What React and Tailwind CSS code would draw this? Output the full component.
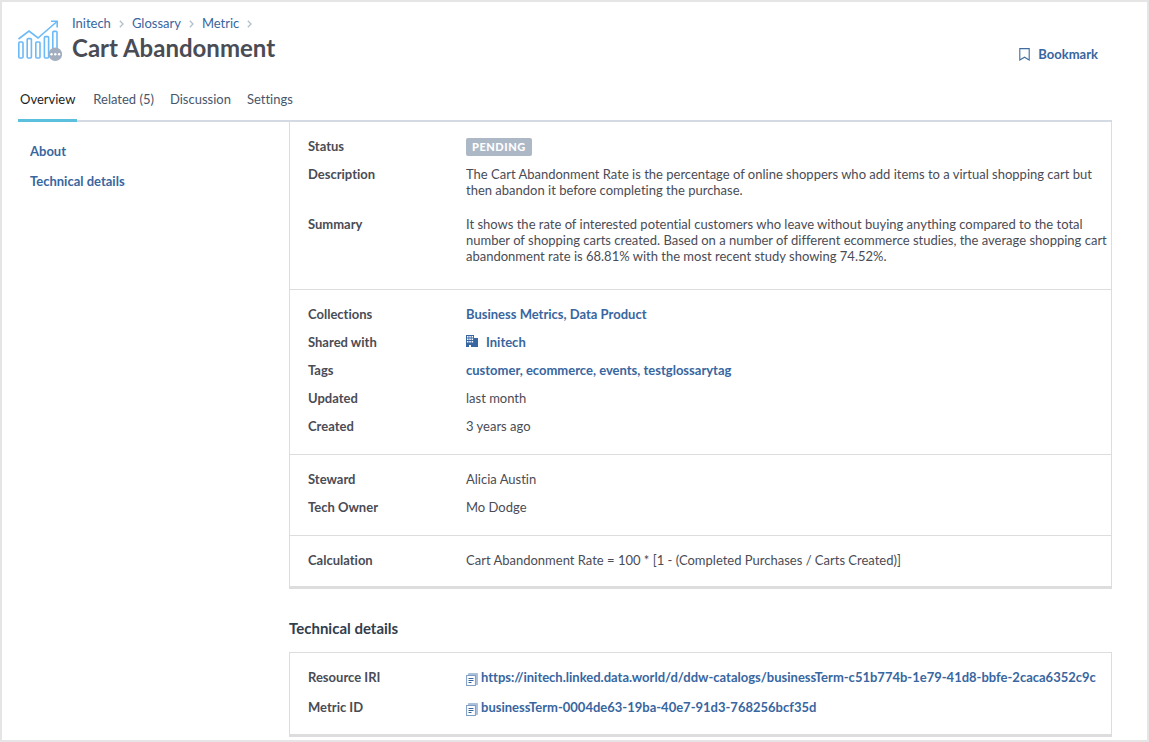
import React from 'react';

const tabs = ['Overview', 'Related (5)', 'Discussion', 'Settings'];
const crumbs = ['Initech', 'Glossary', 'Metric'];

const MetricIcon = () => (
  <svg className="h-[41px] w-11 shrink-0" viewBox="0 0 44 41" fill="none" aria-hidden="true">
    <g stroke="#6cbaf7" strokeWidth="1.6">
      <rect x="0.8" y="22" width="4.2" height="16" rx="1" />
      <rect x="9.2" y="18.6" width="4.2" height="19.4" rx="1" />
      <rect x="17.8" y="22" width="4.2" height="16" rx="1" />
      <rect x="26.4" y="16.6" width="4.2" height="21.4" rx="1" />
      <rect x="34.8" y="11.4" width="4.2" height="26.6" rx="1" />
      <path d="M0.5 19 L11 11 L20 18 L39 1.5" />
      <path d="M33 1.2 H39.2 V7.5" />
    </g>
    <circle cx="37.3" cy="34.2" r="6.8" fill="#a2aebd" />
    <g fill="#fff">
      <circle cx="33.5" cy="34.2" r="1.2" />
      <circle cx="37.3" cy="34.2" r="1.2" />
      <circle cx="41.1" cy="34.2" r="1.2" />
    </g>
  </svg>
);

const ChevronIcon = () => (
  <svg className="mt-0.5 h-2 w-[5px]" viewBox="0 0 5 8" fill="none" stroke="#b4bfcc" strokeWidth="1.3" aria-hidden="true">
    <path d="M0.8 0.8 L4 4 L0.8 7.2" />
  </svg>
);

const BookmarkIcon = () => (
  <svg className="h-[13px] w-[11px]" viewBox="0 0 11 13" fill="none" stroke="#3f6c9f" strokeWidth="1.1" aria-hidden="true">
    <path d="M0.8 0.6 H10.2 V12 L5.5 9.2 L0.8 12 Z" />
  </svg>
);

const BuildingIcon = () => (
  <svg className="mt-px h-3 w-3" viewBox="0 0 12 12" aria-hidden="true">
    <path
      fill="#3866a0"
      fillRule="evenodd"
      d="M0 0 H8 V3 H12 V12 H5 V10 H3 V12 H0 Z M1 1 V2.5 H2.5 V1 Z M3.3 1 V2.5 H4.8 V1 Z M5.6 1 V2.5 H7.1 V1 Z M1 3.5 V5 H2.5 V3.5 Z M3.3 3.5 V5 H4.8 V3.5 Z M5.6 3.5 V5 H7.1 V3.5 Z M1 6 V7.5 H2.5 V6 Z M3.3 6 V7.5 H4.8 V6 Z M5.6 6 V7.5 H7.1 V6 Z"
    />
  </svg>
);

const CopyIcon = () => (
  <svg className="h-[13px] w-3" viewBox="0 0 12 13" fill="none" aria-hidden="true">
    <path d="M2.5 0.5 H11.5 V11.5 H9.5 V2.5 H2.5 Z" fill="#a9bfdb" stroke="#8fabcd" strokeWidth="0.6" />
    <rect x="0.6" y="2.5" width="8.8" height="10" fill="#fff" stroke="#7c9cc4" strokeWidth="1" />
    <path d="M2.5 5.5 H7.5 M2.5 7.5 H7.5 M2.5 9.5 H5.5" stroke="#3866a0" strokeWidth="1" />
  </svg>
);

const Row = ({ label, children }) => (
  <div className="flex">
    <dt className="w-[158px] shrink-0 font-bold">{label}</dt>
    <dd className="min-w-0 flex-1">{children}</dd>
  </div>
);

const Section = ({ children }) => (
  <dl className="flex flex-col gap-3 border-t border-[#dddddd] pt-4 pr-1 pb-5 pl-[18px] first:border-t-0 first:pb-[25px] last:pb-[18px]">
    {children}
  </dl>
);

const BlueLink = ({ children }) => (
  <a href="#" className="font-bold text-[#3866a0]">
    {children}
  </a>
);

// Comma separated list of links
const LinkList = ({ items }) => (
  <span className="font-bold text-[#3866a0]">
    {items.map((item, i) => (
      <React.Fragment key={item}>
        {i > 0 && ', '}
        <BlueLink>{item}</BlueLink>
      </React.Fragment>
    ))}
  </span>
);

const CopyValue = ({ value }) => (
  <div className="flex h-4 items-start gap-[3px]">
    <button type="button" aria-label="Copy" className="mt-1">
      <CopyIcon />
    </button>
    <BlueLink>{value}</BlueLink>
  </div>
);

const App = () => {
  return (
    <div className="min-h-screen border-2 border-[#e5e5e5] bg-white pr-[35px] pb-[3px] pl-4 font-['Lato',sans-serif] text-[13px] leading-4 text-[#4a4c55] [font-variant-ligatures:none]">
      <header className="flex items-start justify-between pt-3">
        <div className="flex gap-2.5">
          <div className="pt-1.5">
            <MetricIcon />
          </div>
          <div>
            <nav aria-label="Breadcrumb" className="flex items-center gap-2 pt-px">
              {crumbs.map((crumb) => (
                <React.Fragment key={crumb}>
                  <a href="#" className="text-[#3866a0]">{crumb}</a>
                  <ChevronIcon />
                </React.Fragment>
              ))}
            </nav>
            <h1 className="mt-px text-2xl leading-8 font-bold">Cart Abandonment</h1>
          </div>
        </div>
        <button type="button" className="mt-8 mr-3.5 flex items-center gap-2 font-bold text-[#3866a0]">
          <BookmarkIcon />
          Bookmark
        </button>
      </header>

      <nav aria-label="Sections" className="mt-5 flex gap-4 border-b-2 border-[#d3dae4]">
        {tabs.map((tab, i) => (
          <a
            key={tab}
            href="#"
            className={
              i === 0
                ? '-mb-0.5 border-b-3 border-[#5bc0de] px-0.5 pt-[7px] pb-3 text-[#1b1f27]'
                : 'pt-[7px] pb-3 text-[#47566b]'
            }
          >
            {tab}
          </a>
        ))}
      </nav>

      <div className="flex">
        <aside className="flex w-[271px] shrink-0 flex-col items-start gap-3.5 pt-[21px] pl-3">
          <BlueLink>About</BlueLink>
          <BlueLink>Technical details</BlueLink>
        </aside>

        <main className="min-w-0 flex-1">
          <div className="border-x border-b-3 border-[#dddddd]">
            <Section>
              <Row label="Status">
                <span className="flex h-[18px] w-fit items-center rounded-xs bg-[#adb8c7] px-1.5 text-[11px] font-black tracking-wider text-white -mb-0.5">
                  PENDING
                </span>
              </Row>
              <Row label="Description">
                The Cart Abandonment Rate is the percentage of online shoppers who add items to a virtual shopping cart but
                then abandon it before completing the purchase.
              </Row>
              <div className="pt-1.5">
                <Row label="Summary">
                  It shows the rate of interested potential customers who leave without buying anything compared to the
                  total number of shopping carts created. Based on a number of different ecommerce studies, the average
                  shopping cart abandonment rate is 68.81% with the most recent study showing 74.52%.
                </Row>
              </div>
            </Section>
            <Section>
              <Row label="Collections">
                <LinkList items={['Business Metrics', 'Data Product']} />
              </Row>
              <Row label="Shared with">
                <span className="flex items-start gap-2">
                  <BuildingIcon />
                  <BlueLink>Initech</BlueLink>
                </span>
              </Row>
              <Row label="Tags">
                <LinkList items={['customer', 'ecommerce', 'events', 'testglossarytag']} />
              </Row>
              <Row label="Updated">last month</Row>
              <Row label="Created">3 years ago</Row>
            </Section>
            <Section>
              <Row label="Steward">Alicia Austin</Row>
              <Row label="Tech Owner">Mo Dodge</Row>
            </Section>
            <Section>
              <Row label="Calculation">Cart Abandonment Rate = 100 * [1 - (Completed Purchases / Carts Created)]</Row>
            </Section>
          </div>

          <h2 className="mt-[31px] mb-4 text-[15px] leading-4 font-bold text-[#323d4d]">Technical details</h2>
          <dl className="flex flex-col gap-3.5 border border-b-3 border-[#dddddd] pt-4 pr-1 pb-[19px] pl-[18px]">
            <Row label="Resource IRI">
              <CopyValue value="https://initech.linked.data.world/d/ddw-catalogs/businessTerm-c51b774b-1e79-41d8-bbfe-2caca6352c9c" />
            </Row>
            <Row label="Metric ID">
              <CopyValue value="businessTerm-0004de63-19ba-40e7-91d3-768256bcf35d" />
            </Row>
          </dl>
        </main>
      </div>
    </div>
  );
};

export default App;
